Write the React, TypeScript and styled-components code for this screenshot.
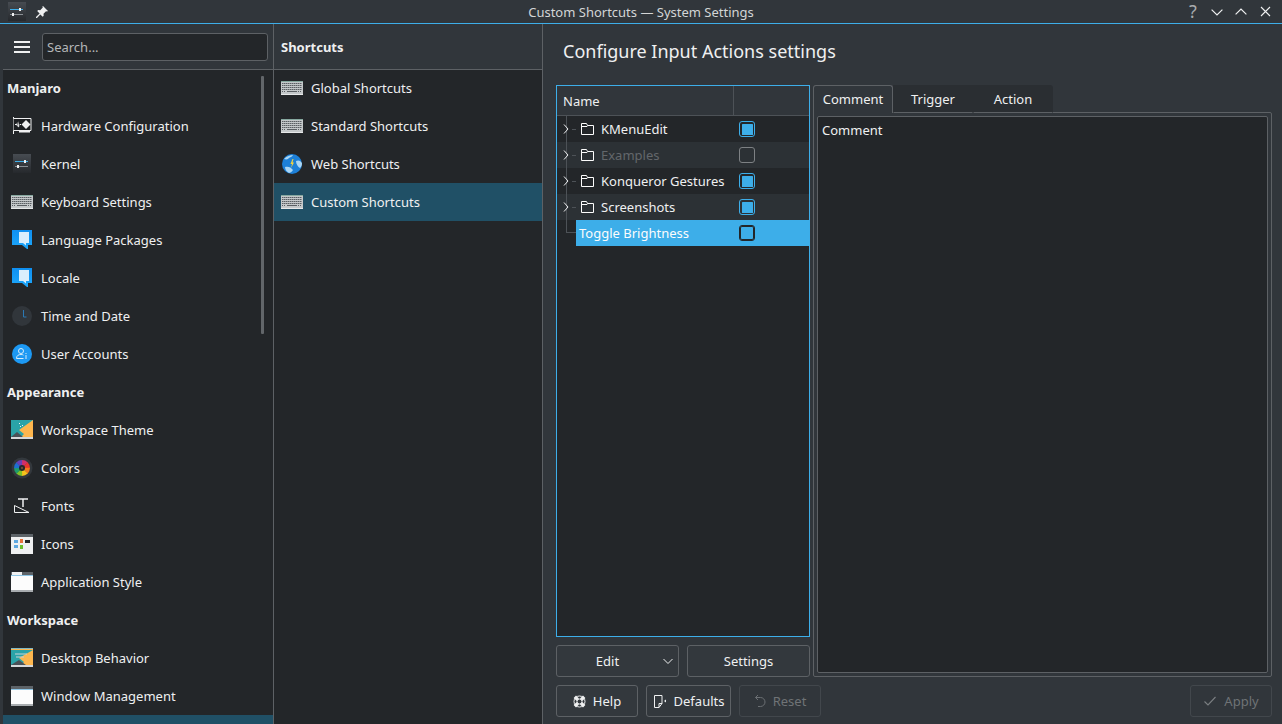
import React from 'react';
import styled, { createGlobalStyle } from 'styled-components';

const GlobalStyle = createGlobalStyle`
  html, body { margin: 0; padding: 0; background: #31363b; }
  * { box-sizing: border-box; }
`;

const lineColor = '#5d6165';

// ---- icons ----
const KernelIcon: React.FC<{ id: string }> = ({ id }) => (
  <svg width="22" height="22" viewBox="0 0 22 22">
    <defs>
      <linearGradient id={id} x1="0" y1="0" x2="0" y2="1">
        <stop offset="0" stopColor="#474c52" />
        <stop offset="1" stopColor="#26292d" />
      </linearGradient>
    </defs>
    <rect x="2" y="1" width="18" height="19" fill={`url(#${id})`} />
    <rect x="4" y="8" width="13" height="1" fill="#3daee9" />
    <rect x="13" y="7" width="2" height="3" fill="#eff0f1" />
    <rect x="4" y="13" width="13" height="1" fill="#8a8f94" />
    <rect x="6" y="12" width="2" height="3" fill="#eff0f1" />
  </svg>
);

const PinIcon = () => (
  <svg width="14" height="14" viewBox="0 0 14 14">
    <path d="M8 1l5 5-1 .6-1-.4-2.500 2.600.2 2-1 1-2.400-2.400L2 13l-1 0 0-1 3.600-3.600L2.200 6l1-1 2 .2L7.800 2.600 7.400 1.600z" fill="#eff0f1" />
  </svg>
);

const HardwareIcon = () => (
  <svg width="22" height="22" viewBox="0 0 22 22">
    <path d="M2.500 2v17" stroke="#eff0f1" fill="none" />
    <path d="M2.500 3.500H20V15.500H2.500" fill="#1c1e21" stroke="#eff0f1" />
    <rect x="8" y="16" width="11" height="1.500" fill="#eff0f1" />
    <path d="M15 5l4.500 4.500-4.500 4.500-4.500-4.500z" fill="#eff0f1" />
    <path d="M4 9h1.500l.7-2 .7 5 .7-6 .7 5 .6-2H10v1H8.500l-.3 1.500-.7 1-.7-2-.6 1L5.500 10H4z" fill="#eff0f1" />
  </svg>
);

const KeyboardIcon = () => (
  <svg width="22" height="22" viewBox="0 0 22 22">
    <rect y="4" width="22" height="14" fill="#c4c8ca" />
    <rect y="4" width="22" height="1" fill="#86a89f" />
    <rect y="17" width="22" height="1" fill="#e6e8e9" />
    {[6, 8, 10, 12].map(y => (
      <path key={y} d={`M1 ${y + 0.5}h20`} stroke="#5a5f63" strokeDasharray="1.500 .5" />
    ))}
    <path d="M6 14.500h10" stroke="#5a5f63" />
    <path d="M1 14.500h4M17 14.500h4" stroke="#5a5f63" strokeDasharray="1 1" />
  </svg>
);

const BubbleIcon: React.FC<{ id: string }> = ({ id }) => (
  <svg width="22" height="22" viewBox="0 0 22 22">
    <defs>
      <linearGradient id={id} x1="0" y1="0" x2="0" y2="1">
        <stop offset="0" stopColor="#0f8ff0" />
        <stop offset="1" stopColor="#1ea8fb" />
      </linearGradient>
    </defs>
    <path d="M1 1h20v15h-4v4l-1 0-5-4H1z" fill={`url(#${id})`} />
    <path d="M8 3h10v11h-3v2.500L12 14H8z" fill="#d9eefc" />
  </svg>
);

const ClockIcon = () => (
  <svg width="22" height="22" viewBox="0 0 22 22">
    <circle cx="11" cy="11" r="10" fill="#31363b" />
    <path d="M12.500 5v7h3" stroke="#2b79b5" fill="none" />
  </svg>
);

const UserIcon = () => (
  <svg width="22" height="22" viewBox="0 0 22 22">
    <circle cx="11" cy="11" r="10" fill="#1d99f3" />
    <circle cx="10" cy="8" r="2.500" fill="none" stroke="#d6ecfb" />
    <path d="M5.500 15.500c0-3 2-4 4.500-4 1 0 2 .2 2.500 .6M5.500 15.500h7" fill="none" stroke="#d6ecfb" />
    <path d="M15 12v4M15 10v1" stroke="#d6ecfb" />
  </svg>
);

const ThemeIcon = () => (
  <svg width="22" height="22" viewBox="0 0 22 22">
    <rect y="1" width="22" height="19" fill="#fdb64e" />
    <path d="M0 1h22L8 11l5 4-3 3H0z" fill="#2aa3a8" />
    <path d="M0 18l6-5 6 5z" fill="#4a5157" />
    <path d="M8 4h1v1H8zM11 6h1v1h-1zM9 7h1v1H9z" fill="#eff0f1" />
    <rect y="18" width="22" height="2" fill="#d5d8da" />
  </svg>
);

const wedgeColors = ['#d22f6a', '#e8342e', '#f07a1c', '#f6c21c', '#7fc128', '#1f9e6a', '#1d6fd0', '#6a3fb5'];

const ColorsIcon = () => (
  <svg width="22" height="22" viewBox="0 0 22 22">
    <circle cx="11" cy="11" r="10.500" fill="#33383d" />
    {wedgeColors.map((color, i) => {
      const a0 = (i * Math.PI) / 4 - 0.02;
      const a1 = ((i + 1) * Math.PI) / 4 + 0.02;
      const p = (a: number) => `${(11 + 8 * Math.sin(a)).toFixed(2)} ${(11 - 8 * Math.cos(a)).toFixed(2)}`;
      return <path key={color} d={`M11 11L${p(a0)}A8 8 0 0 1 ${p(a1)}z`} fill={color} />;
    })}
    <circle cx="11" cy="11" r="3" fill="#232629" />
    <circle cx="11" cy="11" r="1.200" fill="#6b4a3a" />
  </svg>
);

const FontsIcon = () => (
  <svg width="22" height="22" viewBox="0 0 22 22">
    <path d="M7 4h10M12 4v8" stroke="#eff0f1" strokeWidth="1.500" fill="none" />
    <path d="M3.500 10.500v7h14.500z" stroke="#eff0f1" fill="none" />
  </svg>
);

const IconsIcon = () => (
  <svg width="22" height="22" viewBox="0 0 22 22">
    <rect y="1" width="22" height="20" fill="#eff0f1" />
    <rect y="1" width="22" height="3" fill="#5d6368" />
    <rect x="3" y="7" width="4" height="3" fill="#5fa8e0" />
    <rect x="9" y="6" width="3" height="4" fill="#e8703a" />
    <rect x="14" y="7" width="5" height="3" fill="#232629" />
    <rect x="3" y="12" width="4" height="3" fill="#5fa8e0" />
    <rect x="9" y="12" width="3" height="4" fill="#6cbe2c" />
  </svg>
);

const WindowIcon: React.FC<{ tab?: boolean }> = ({ tab }) => (
  <svg width="22" height="22" viewBox="0 0 22 22">
    <rect y="1" width="22" height="20" fill="#fcfcfc" />
    <rect y="1" width="22" height="3" fill="#5d6368" />
    <rect y="4" width="22" height="1" fill="#8fc6e6" />
    {tab && <rect x="1" y="1" width="10" height="3" fill="#eff0f1" />}
    <rect y="19" width="22" height="2" fill="#a8acaf" />
  </svg>
);

const DesktopIcon = () => (
  <svg width="22" height="22" viewBox="0 0 22 22">
    <rect y="1" width="22" height="19" fill="#fdb64e" />
    <path d="M0 3h22L8 11l5 4-3 3H0z" fill="#2aa3a8" />
    <path d="M0 18l8-5 7 5z" fill="#4a5157" />
    <path d="M4 7h12M5 10h8" stroke="#c9d3d6" />
    <rect y="1" width="22" height="1" fill="#7fb8c4" />
    <rect y="18" width="22" height="2" fill="#d5d8da" />
  </svg>
);

const GlobeIcon = () => (
  <svg width="22" height="22" viewBox="0 0 22 22">
    <circle cx="11" cy="11" r="10" fill="#1d80d8" />
    <path d="M3 6c3-3 6-4 9-4-1 2-3 2-4 3s-2 2-5 1zM15 8c2-1 4-1 6 2 0 3-1 4-2 5-2-1-4-4-4-7zM4 14c3-1 6 0 8 3-1 2-3 3-4 3-2-1-4-3-4-6z" fill="#a9d6f5" />
    <path d="M11.500 6l-2 5h1.500l-1 4 3-5.500h-1.500l1-3.500z" fill="#f5d33c" />
  </svg>
);

const FolderIcon = () => (
  <svg width="14" height="14" viewBox="0 0 14 14">
    <path d="M.5 12.500v-11h5l1 2h6v9zM.5 4.500h5.500l1-1" fill="none" stroke="#fcfcfc" />
  </svg>
);

const Chevron: React.FC<{ dir: 'right' | 'down' | 'up'; size?: number }> = ({ dir, size = 10 }) => {
  const d = { right: 'M3 .5l4 4.500-4 4.500', down: 'M.5 3l4.500 4.500L9.500 3', up: 'M.5 7L5 2.500 9.500 7' }[dir];
  return (
    <svg width={size} height={size} viewBox="0 0 10 10">
      <path d={d} fill="none" stroke="#eff0f1" />
    </svg>
  );
};

const CloseIcon = () => (
  <svg width="11" height="11" viewBox="0 0 11 11">
    <path d="M1 1l9 9M10 1l-9 9" stroke="#eff0f1" strokeWidth="1.100" />
  </svg>
);

const HelpIcon = () => (
  <svg width="13" height="13" viewBox="0 0 13 13">
    <circle cx="6.500" cy="6.500" r="5.500" fill="none" stroke="#eff0f1" />
    <circle cx="6.500" cy="6.500" r="2.500" fill="none" stroke="#eff0f1" />
    <path d="M1.800 1.800l3 3M11.200 1.800l-3 3M1.800 11.200l3-3M11.200 11.200l-3-3" stroke="#eff0f1" strokeWidth="3.400" />
  </svg>
);

const DefaultsIcon = () => (
  <svg width="14" height="16" viewBox="0 0 14 16">
    <path d="M1.500 2.500h7.500v8l-3 4h-4.500zM6 14.500v-4h3" fill="none" stroke="#eff0f1" />
    <path d="M13 6.500v3l-2-1.500z" fill="#eff0f1" />
  </svg>
);

const ResetIcon = () => (
  <svg width="12" height="14" viewBox="0 0 12 14">
    <path d="M4 1L1.500 3.500 4 6M1.500 3.500h5a4.500 4.500 0 0 1 0 9H4" fill="none" stroke="#6b6f73" />
  </svg>
);

const CheckIcon = () => (
  <svg width="14" height="14" viewBox="0 0 14 14">
    <path d="M1.500 7.500l3.500 3.500 7.500-8" fill="none" stroke="#7b7f82" strokeWidth="1.100" />
  </svg>
);

const HamburgerIcon = () => (
  <svg width="16" height="12" viewBox="0 0 16 12">
    <path d="M0 1h16M0 6h16M0 11h16" stroke="#eff0f1" strokeWidth="2" />
  </svg>
);

// ---- layout ----
const Window = styled.div`
  width: 1282px;
  height: 724px;
  overflow: hidden;
  display: flex;
  flex-direction: column;
  background: #31363b;
  color: #eff0f1;
  font-family: 'Noto Sans', sans-serif;
  font-size: 13px;
`;

const TitleBar = styled.header`
  height: 24px;
  flex: none;
  display: grid;
  grid-template-columns: 1fr auto 1fr;
  align-items: center;
  border-bottom: 1px solid #3daee9;
`;

const TitleLeft = styled.div`
  display: flex;
  align-items: center;
  gap: 7px;
  padding-left: 6px;
  height: 23px;
`;

const TitleText = styled.div`
  color: #d3d5d6;
`;

const TitleRight = styled.div`
  display: flex;
  justify-content: flex-end;
  align-items: center;
  padding-right: 5px;
`;

const TitleButton = styled.div`
  width: 24px;
  height: 23px;
  display: flex;
  align-items: center;
  justify-content: center;
  color: #a8abad;
  font-size: 18px;
  line-height: 23px;
`;

const Body = styled.div`
  flex: 1;
  display: flex;
  min-height: 0;
`;

const Column = styled.div<{ $width: number }>`
  width: ${p => p.$width}px;
  flex: none;
  display: flex;
  flex-direction: column;
  border-right: 1px solid ${lineColor};
  min-height: 0;
`;

const SideColumn = styled(Column)`
  margin-left: 3px;
`;

const ColumnHeader = styled.div`
  height: 45px;
  flex: none;
  display: flex;
  align-items: center;
  position: relative;
  z-index: 1;
  box-shadow: 0 1px 0 ${lineColor};
`;

const SearchHeader = styled(ColumnHeader)`
  padding: 1px 5px 0 11px;
  gap: 12px;
`;

const SearchInput = styled.div`
  flex: 1;
  height: 28px;
  background: #232629;
  border: 1px solid ${lineColor};
  border-radius: 3px;
  color: #b4b6b8;
  display: flex;
  align-items: center;
  padding-left: 4px;
`;

const HeaderTitle = styled.div`
  font-weight: 700;
  padding: 0 0 0 7px;
`;

const List = styled.div`
  flex: 1;
  background: #232629;
  position: relative;
  overflow: hidden;
`;

const SectionLabel = styled.div`
  height: 38px;
  display: flex;
  align-items: center;
  padding-left: 4px;
  font-weight: 700;
`;

const Row = styled.div<{ $selected?: boolean }>`
  height: 38px;
  display: flex;
  align-items: center;
  gap: 8px;
  padding-left: 8px;
  background: ${p => (p.$selected ? '#205066' : 'transparent')};
`;

const SubRow = styled(Row)`
  padding-left: 7px;
`;

const ScrollThumb = styled.div`
  position: absolute;
  top: 7px;
  right: 9px;
  width: 3px;
  height: 258px;
  border-radius: 1px;
  background: #62666a;
`;

const RightPane = styled.main`
  flex: 1;
  display: flex;
  flex-direction: column;
  min-width: 0;
`;

const PageTitle = styled.h1`
  height: 61px;
  flex: none;
  margin: 0;
  padding: 15px 0 0 20px;
  font-size: 18px;
  font-weight: 400;
  line-height: 24px;
`;

const Content = styled.div`
  display: flex;
  gap: 3px;
  padding: 0 10px 0 13px;
  height: 592px;
  flex: none;
`;

const TreeColumn = styled.div`
  width: 254px;
  flex: none;
  display: flex;
  flex-direction: column;
  gap: 8px;
`;

const TreeBox = styled.div`
  flex: 1;
  border: 1px solid #3daee9;
  background: #232629;
  position: relative;
  display: flex;
  flex-direction: column;
`;

const TreeHeader = styled.div`
  height: 30px;
  flex: none;
  display: grid;
  grid-template-columns: 176px 1fr;
  background: #31363b;
  border-bottom: 1px solid #4d5257;
`;

const HeaderCell = styled.div`
  display: flex;
  align-items: center;
  padding-left: 6px;
  & + & {
    border-left: 1px solid #4d5257;
  }
`;

const TreeRow = styled.div<{ $alt?: boolean }>`
  height: 26px;
  display: grid;
  grid-template-columns: 182px 1fr;
  align-items: center;
  background: ${p => (p.$alt ? '#2c3135' : 'transparent')};
  position: relative;
`;

const TreeName = styled.div<{ $disabled?: boolean }>`
  display: flex;
  align-items: center;
  gap: 6px;
  padding-left: 24px;
  color: ${p => (p.$disabled ? '#63676b' : '#eff0f1')};
  svg { flex: none; }
`;

const Expander = styled.span`
  position: absolute;
  left: 4px;
  top: 8px;
  height: 10px;
  display: flex;
  z-index: 2;
`;

const TreeDash = styled.span`
  position: absolute;
  left: 15px;
  top: 13px;
  width: 4px;
  height: 1px;
  background: #4d5257;
`;

const SelectedRow = styled(TreeRow)`
  margin-left: 19px;
  grid-template-columns: 163px 1fr;
  background: #3daee9;
  color: #fcfcfc;
`;

const SelectedName = styled.div`
  padding-left: 3px;
`;

const TreeGuide = styled.div`
  position: absolute;
  left: 9px;
  top: 30px;
  width: 10px;
  height: 117px;
  z-index: 1;
  border-left: 1px solid #4d5257;
  border-bottom: 1px solid #4d5257;
`;

const CheckBox = styled.span<{ $state: 'on' | 'off' | 'selected' }>`
  width: 16px;
  height: 16px;
  justify-self: start;
  border-radius: 3px;
  display: block;
  border: 1px solid ${p => ({ on: '#3daee9', off: '#7d8184', selected: '#232629' }[p.$state])};
  box-shadow: ${p => (p.$state === 'selected' ? 'inset 0 0 0 1px #232629' : 'none')};
  background: ${p => (p.$state === 'off' ? 'transparent' : '#3daee9')};
  ${p => p.$state === 'on' && 'background-clip: content-box; padding: 1.5px;'}
`;

const ButtonRow = styled.div`
  display: flex;
  gap: 8px;
  flex: none;
`;

const Button = styled.div<{ $width?: number; $disabled?: boolean }>`
  width: ${p => (p.$width ? `${p.$width}px` : 'auto')};
  flex: ${p => (p.$width ? 'none' : '1')};
  height: 32px;
  display: flex;
  align-items: center;
  justify-content: center;
  gap: 7px;
  border: 1px solid ${p => (p.$disabled ? '#42474c' : lineColor)};
  border-radius: 3px;
  background: ${p => (p.$disabled ? '#31363b' : '#33383d')};
  color: ${p => (p.$disabled ? '#6f7376' : '#eff0f1')};
  position: relative;
`;

const ButtonCaret = styled.span`
  position: absolute;
  right: 5px;
  top: 10px;
  display: flex;
`;

const EditLabel = styled.span`
  margin-right: 20px;
`;

const TabColumn = styled.div`
  flex: 1;
  display: flex;
  flex-direction: column;
  min-width: 0;
`;

const TabBar = styled.div`
  height: 28px;
  flex: none;
  display: flex;
  margin-bottom: -1px;
  position: relative;
  z-index: 1;
`;

const Tab = styled.div<{ $active?: boolean }>`
  width: 80px;
  height: 28px;
  display: flex;
  align-items: center;
  justify-content: center;
  padding-bottom: 1px;
  background: ${p => (p.$active ? '#31363b' : '#2a2e32')};
  border: 1px solid ${p => (p.$active ? lineColor : 'transparent')};
  border-bottom: ${p => (p.$active ? 'none' : `1px solid ${lineColor}`)};
  border-radius: ${p => (p.$active ? '3px 3px 0 0' : '0')};
  &:last-child {
    border-top-right-radius: 3px;
  }
`;

const TabPanel = styled.div`
  flex: 1;
  display: flex;
  border: 1px solid ${lineColor};
  border-radius: 0 2px 2px 2px;
  padding: 3px;
`;

const CommentBox = styled.div`
  flex: 1;
  background: #232629;
  border: 1px solid ${lineColor};
  border-radius: 2px;
  padding: 4px;
  line-height: 18px;
`;

const Footer = styled.footer`
  display: flex;
  align-items: center;
  gap: 8px;
  padding: 8px 10px 0 13px;
`;

const Spacer = styled.div`
  flex: 1;
`;

type NavEntry = { section: string } | { label: string; icon: React.ReactNode };

const navEntries: NavEntry[] = [
  { section: 'Manjaro' },
  { label: 'Hardware Configuration', icon: <HardwareIcon /> },
  { label: 'Kernel', icon: <KernelIcon id="kernel-row" /> },
  { label: 'Keyboard Settings', icon: <KeyboardIcon /> },
  { label: 'Language Packages', icon: <BubbleIcon id="bubble-lang" /> },
  { label: 'Locale', icon: <BubbleIcon id="bubble-locale" /> },
  { label: 'Time and Date', icon: <ClockIcon /> },
  { label: 'User Accounts', icon: <UserIcon /> },
  { section: 'Appearance' },
  { label: 'Workspace Theme', icon: <ThemeIcon /> },
  { label: 'Colors', icon: <ColorsIcon /> },
  { label: 'Fonts', icon: <FontsIcon /> },
  { label: 'Icons', icon: <IconsIcon /> },
  { label: 'Application Style', icon: <WindowIcon tab /> },
  { section: 'Workspace' },
  { label: 'Desktop Behavior', icon: <DesktopIcon /> },
  { label: 'Window Management', icon: <WindowIcon /> },
];

const shortcutEntries = [
  { label: 'Global Shortcuts', icon: <KeyboardIcon /> },
  { label: 'Standard Shortcuts', icon: <KeyboardIcon /> },
  { label: 'Web Shortcuts', icon: <GlobeIcon /> },
  { label: 'Custom Shortcuts', icon: <KeyboardIcon />, selected: true },
];

const treeEntries = [
  { label: 'KMenuEdit', on: true },
  { label: 'Examples', on: false, disabled: true, alt: true },
  { label: 'Konqueror Gestures', on: true },
  { label: 'Screenshots', on: true, alt: true },
];

export default function App() {
  return (
    <Window>
      <GlobalStyle />
      <TitleBar>
        <TitleLeft>
          <KernelIcon id="kernel-title" />
          <PinIcon />
        </TitleLeft>
        <TitleText>Custom Shortcuts — System Settings</TitleText>
        <TitleRight>
          <TitleButton>?</TitleButton>
          <TitleButton><Chevron dir="down" size={12} /></TitleButton>
          <TitleButton><Chevron dir="up" size={12} /></TitleButton>
          <TitleButton><CloseIcon /></TitleButton>
        </TitleRight>
      </TitleBar>
      <Body>
        <SideColumn $width={271}>
          <SearchHeader>
            <HamburgerIcon />
            <SearchInput>Search...</SearchInput>
          </SearchHeader>
          <List>
            {navEntries.map(entry =>
              'section' in entry ? (
                <SectionLabel key={entry.section}>{entry.section}</SectionLabel>
              ) : (
                <Row key={entry.label}>
                  {entry.icon}
                  <span>{entry.label}</span>
                </Row>
              )
            )}
            <Row $selected />
            <ScrollThumb />
          </List>
        </SideColumn>
        <Column $width={269}>
          <ColumnHeader>
            <HeaderTitle>Shortcuts</HeaderTitle>
          </ColumnHeader>
          <List>
            {shortcutEntries.map(entry => (
              <SubRow key={entry.label} $selected={entry.selected}>
                {entry.icon}
                <span>{entry.label}</span>
              </SubRow>
            ))}
          </List>
        </Column>
        <RightPane>
          <PageTitle>Configure Input Actions settings</PageTitle>
          <Content>
            <TreeColumn>
              <TreeBox>
                <TreeHeader>
                  <HeaderCell>Name</HeaderCell>
                  <HeaderCell />
                </TreeHeader>
                <TreeGuide />
                {treeEntries.map(entry => (
                  <TreeRow key={entry.label} $alt={entry.alt}>
                    <TreeName $disabled={entry.disabled}>
                      <FolderIcon />
                      <span>{entry.label}</span>
                    </TreeName>
                    <CheckBox $state={entry.on ? 'on' : 'off'} />
                    <TreeDash />
                    <Expander><Chevron dir="right" /></Expander>
                  </TreeRow>
                ))}
                <SelectedRow>
                  <SelectedName>Toggle Brightness</SelectedName>
                  <CheckBox $state="selected" />
                </SelectedRow>
              </TreeBox>
              <ButtonRow>
                <Button>
                  <EditLabel>Edit</EditLabel>
                  <ButtonCaret><Chevron dir="down" /></ButtonCaret>
                </Button>
                <Button>Settings</Button>
              </ButtonRow>
            </TreeColumn>
            <TabColumn>
              <TabBar>
                <Tab $active>Comment</Tab>
                <Tab>Trigger</Tab>
                <Tab>Action</Tab>
              </TabBar>
              <TabPanel>
                <CommentBox>Comment</CommentBox>
              </TabPanel>
            </TabColumn>
          </Content>
          <Footer>
            <Button $width={82}><HelpIcon />Help</Button>
            <Button $width={85}><DefaultsIcon />Defaults</Button>
            <Button $width={82} $disabled><ResetIcon />Reset</Button>
            <Spacer />
            <Button $width={82} $disabled><CheckIcon />Apply</Button>
          </Footer>
        </RightPane>
      </Body>
    </Window>
  );
}
